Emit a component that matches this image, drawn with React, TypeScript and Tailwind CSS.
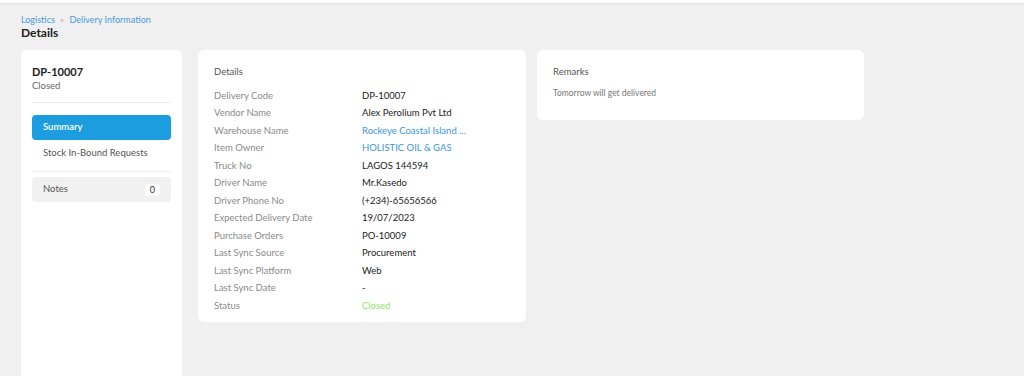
const rows: { label: string; value: string; tone?: "link" | "ok" }[] = [
  { label: "Delivery Code", value: "DP-10007" },
  { label: "Vendor Name", value: "Alex Perolium Pvt Ltd" },
  { label: "Warehouse Name", value: "Rockeye Coastal Island ...", tone: "link" },
  { label: "Item Owner", value: "HOLISTIC OIL & GAS", tone: "link" },
  { label: "Truck No", value: "LAGOS 144594" },
  { label: "Driver Name", value: "Mr.Kasedo" },
  { label: "Driver Phone No", value: "(+234)-65656566" },
  { label: "Expected Delivery Date", value: "19/07/2023" },
  { label: "Purchase Orders", value: "PO-10009" },
  { label: "Last Sync Source", value: "Procurement" },
  { label: "Last Sync Platform", value: "Web" },
  { label: "Last Sync Date", value: "-" },
  { label: "Status", value: "Closed", tone: "ok" },
];

export default function App() {
  return (
    <div
      className="h-[376px] w-[1024px] overflow-hidden bg-[#f0f0f0]"
      style={{ fontFamily: "Lato, 'Noto Sans', sans-serif" }}
    >
      {/* top bar */}
      <div className="h-[3px] bg-white shadow-[0_1px_2px_rgba(0,0,0,0.08)]" />

      <div className="px-[21px] pt-[11px]">
        {/* Breadcrumb */}
        <div className="flex items-center gap-[5px] text-[9px] leading-[12px] text-[#4a9be0]">
          <span>Logistics</span>
          <span className="text-[#b5b5b5] text-[8px] font-bold">&gt;</span>
          <span>Delivery Information</span>
        </div>
        <h1 className="text-[12px] leading-[14px] font-bold text-[#222]">Details</h1>

        <div className="mt-[10px] flex items-start gap-[16px]">
          {/* Left panel */}
          <div className="h-[340px] w-[161px] rounded-[5px] bg-white px-[11px] pt-[15px]">
            <div className="text-[11px] leading-[14px] font-bold text-[#222]">DP-10007</div>
            <div className="text-[9.5px] leading-[14px] text-[#666]">Closed</div>
            <div className="mt-[9px] border-t border-[#ececec]" />
            <div className="mt-[12px] flex h-[25px] items-center rounded-[4px] bg-[#1c9ddf] px-[11px] text-[9.5px] font-semibold text-white">
              Summary
            </div>
            <div className="flex h-[26px] items-center px-[11px] text-[9.5px] text-[#555]">
              Stock In-Bound Requests
            </div>
            <div className="mt-[5px] border-t border-[#f0f0f0]" />
            <div className="mt-[5px] flex h-[25px] items-center justify-between rounded-[4px] bg-[#f1f1f1] px-[11px] text-[9.5px] text-[#555]">
              <span>Notes</span>
              <span className="rounded-[3px] bg-white px-[5px] text-[9px] leading-[12px] text-[#333]">0</span>
            </div>
          </div>

          {/* Details card */}
          <div className="w-[328px] rounded-[6px] bg-white px-[16px] pt-[15px] pb-[7px]">
            <div className="text-[9.5px] leading-[13px] text-[#555]">Details</div>
            <div className="mt-[9px]">
              {rows.map((r) => (
                <div key={r.label} className="flex h-[17.5px] items-center text-[9.5px]">
                  <span className="w-[148px] text-[#8a8a8a]">{r.label}</span>
                  <span
                    className={
                      r.tone === "link"
                        ? "text-[#3d96dc]"
                        : r.tone === "ok"
                        ? "text-[#8ee86a]"
                        : "text-[#222]"
                    }
                  >
                    {r.value}
                  </span>
                </div>
              ))}
            </div>
          </div>

          {/* Remarks card */}
          <div className="h-[70px] w-[327px] -ml-[5px] rounded-[6px] bg-white px-[16px] pt-[15px]">
            <div className="text-[9.5px] leading-[13px] text-[#555]">Remarks</div>
            <div className="mt-[9px] text-[8.5px] text-[#777]">Tomorrow will get delivered</div>
          </div>
        </div>
      </div>
    </div>
  );
}
